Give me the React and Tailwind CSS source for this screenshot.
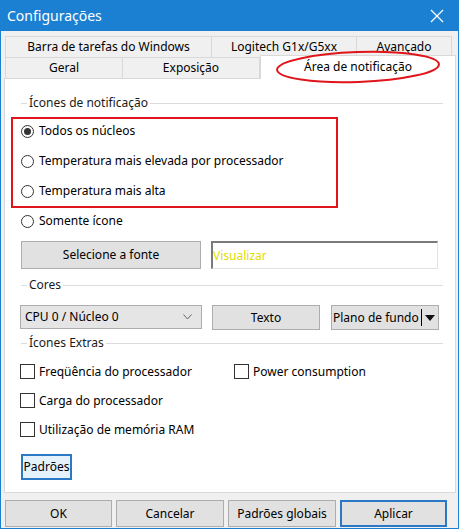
import { useState } from 'react';

const font = { fontFamily: '"Noto Sans", "Open Sans", sans-serif' };

function GroupHeader({ label }) {
  return (
    <div className="flex items-center h-[16px] ml-[16px] mr-[12px] text-[12px] text-[#1a1a1a]">
      <div className="w-[6px] h-px bg-[#dcdcdc]" />
      <span className="px-[2px] leading-none">{label}</span>
      <div className="flex-1 h-px bg-[#dcdcdc]" />
    </div>
  );
}

function Radio({ label, checked, onClick }) {
  return (
    <div onClick={onClick} className="flex items-center h-[30px] pl-[16px] text-[12px] text-black cursor-default">
      <span className="w-[13px] h-[13px] rounded-full border border-[#333] flex items-center justify-center bg-white">
        {checked && <span className="w-[7px] h-[7px] rounded-full bg-[#333]" />}
      </span>
      <span className="ml-[5px]">{label}</span>
    </div>
  );
}

function Check({ label, checked, onClick }) {
  return (
    <div onClick={onClick} className="flex items-center h-[29px] text-[12px] text-black cursor-default">
      <span className="w-[15px] h-[15px] border border-[#333] bg-white flex items-center justify-center text-[11px] leading-none">
        {checked ? '✓' : ''}
      </span>
      <span className="ml-[4px]">{label}</span>
    </div>
  );
}

export default function App() {
  const [mode, setMode] = useState(0);
  const [checks, setChecks] = useState({ freq: false, power: false, load: false, ram: false });
  const toggle = (k) => setChecks(c => ({ ...c, [k]: !c[k] }));

  const radios = ['Todos os núcleos', 'Temperatura mais elevada por processador', 'Temperatura mais alta'];

  return (
    <div style={font} className="w-[459px] h-[529px] bg-[#f0f0f0] border border-[#1c80d2] flex flex-col relative overflow-hidden">
      {/* title bar */}
      <div className="h-[31px] -mt-px -mx-px bg-[#1c80d2] flex items-center justify-between pl-[7px] pr-[15px] text-white">
        <span className="text-[14px]">Configurações</span>
        <svg width="14" height="14" viewBox="0 0 14 14" stroke="white" strokeWidth="1.2">
          <line x1="1" y1="1" x2="13" y2="13" />
          <line x1="13" y1="1" x2="1" y2="13" />
        </svg>
      </div>

      <div className="pl-[3px] pr-[2px] pt-[5px] flex flex-col">
        {/* tab rows */}
        <div className="flex ml-[1px] h-[21px] text-[12px] text-black">
          <div className="w-[207px] border border-[#d9d9d9] border-b-0 flex items-center justify-center">Barra de tarefas do Windows</div>
          <div className="w-[145px] border-t border-r border-[#d9d9d9] flex items-center justify-center">Logitech G1x/G5xx</div>
          <div className="w-[95px] border-t border-r border-[#d9d9d9] flex items-center justify-center">Avançado</div>
        </div>
        <div className="flex ml-[1px] h-[21px] items-end text-[12px] text-black relative z-10">
          <div className="w-[118px] h-[21px] border border-[#d9d9d9] border-b-0 flex items-center justify-center">Geral</div>
          <div className="w-[137px] h-[21px] border-t border-r border-[#d9d9d9] flex items-center justify-center">Exposição</div>
          <div className="w-[196px] h-[24px] -mb-px bg-white border-t border-l border-r border-[#d9d9d9] flex items-center justify-center pb-[2px]">Área de notificação</div>
        </div>

        {/* panel */}
        <div className="w-[452px] h-[415px] bg-white border border-[#d9d9d9] flex flex-col pt-[16px]">
          <GroupHeader label="Ícones de notificação" />
          <div className="mt-[5px]">
            {radios.map((r, i) => (
              <Radio key={r} label={r} checked={mode === i} onClick={() => setMode(i)} />
            ))}
            <Radio label="Somente ícone" checked={mode === 3} onClick={() => setMode(3)} />
          </div>

          <div className="flex items-center mt-[5px] pl-[16px] gap-[10px] h-[28px]">
            <button className="w-[180px] h-[28px] bg-[#e1e1e1] border border-[#adadad] text-[12px] text-black">Selecione a fonte</button>
            <div className="w-[227px] h-[28px] border-t-2 border-l-2 border-[#7a7a7a] border-r border-b border-r-[#e3e3e3] border-b-[#e3e3e3] flex items-center text-[12px] text-[#e2dc00]">
              Visualizar
            </div>
          </div>

          <div className="mt-[8px]">
            <GroupHeader label="Cores" />
          </div>

          <div className="flex items-center mt-[11px] pl-[15px] h-[25px] text-[12px] text-black">
            <div className="w-[182px] h-[24px] bg-[#e5e5e5] border border-[#adadad] flex items-center justify-between pl-[4px] pr-[9px]">
              <span>CPU 0 / Núcleo 0</span>
              <svg width="9" height="6" viewBox="0 0 9 6" fill="none" stroke="#666" strokeWidth="1">
                <polyline points="0.5,0.5 4.5,5 8.5,0.5" />
              </svg>
            </div>
            <button className="ml-[10px] w-[108px] h-[25px] bg-[#e1e1e1] border border-[#adadad] mt-[2px]">Texto</button>
            <div className="ml-[11px] w-[108px] h-[25px] bg-[#e1e1e1] border border-[#adadad] mt-[2px] flex items-center pl-[1px]">
              <span>Plano de fundo</span>
              <span className="w-px h-[17px] bg-black ml-[2px]" />
              <svg width="10" height="6" viewBox="0 0 10 6" className="ml-[3px]">
                <polygon points="0,0 10,0 5,6" fill="#111" />
              </svg>
            </div>
          </div>

          <div className="mt-[6px]">
            <GroupHeader label="Ícones Extras" />
          </div>

          <div className="mt-[6px] pl-[15px] flex">
            <div className="w-[214px]">
              <Check label="Freqüência do processador" checked={checks.freq} onClick={() => toggle('freq')} />
              <Check label="Carga do processador" checked={checks.load} onClick={() => toggle('load')} />
              <Check label="Utilização de memória RAM" checked={checks.ram} onClick={() => toggle('ram')} />
            </div>
            <div>
              <Check label="Power consumption" checked={checks.power} onClick={() => toggle('power')} />
            </div>
          </div>

          <div className="pl-[16px] mt-[10px]">
            <button className="w-[51px] h-[26px] bg-[#e5f1fb] border-2 border-[#2b78c5] text-[12px] text-black flex items-center justify-center">Padrões</button>
          </div>
        </div>

        {/* bottom buttons */}
        <div className="flex gap-[4px] ml-[1px] mt-[7px] text-[12px] text-black">
          <button className="w-[107px] h-[27px] bg-[#e1e1e1] border border-[#adadad]">OK</button>
          <button className="w-[108px] h-[27px] bg-[#e1e1e1] border border-[#adadad]">Cancelar</button>
          <button className="w-[108px] h-[27px] bg-[#e1e1e1] border border-[#adadad]">Padrões globais</button>
          <button className="w-[107px] h-[27px] bg-[#e1e1e1] border-2 border-[#2b78c5]">Aplicar</button>
        </div>
      </div>

      {/* red annotations */}
      <div className="absolute z-20 left-[10px] top-[116px] w-[327px] h-[91px] border-2 border-[#e0151b] pointer-events-none" />
      <svg className="absolute z-20 left-[272px] top-[46px] pointer-events-none" width="170" height="40" viewBox="0 0 170 40">
        <ellipse cx="85" cy="20" rx="81" ry="15" fill="none" stroke="#e0151b" strokeWidth="2" transform="rotate(-2 85 20)" />
      </svg>
    </div>
  );
}
